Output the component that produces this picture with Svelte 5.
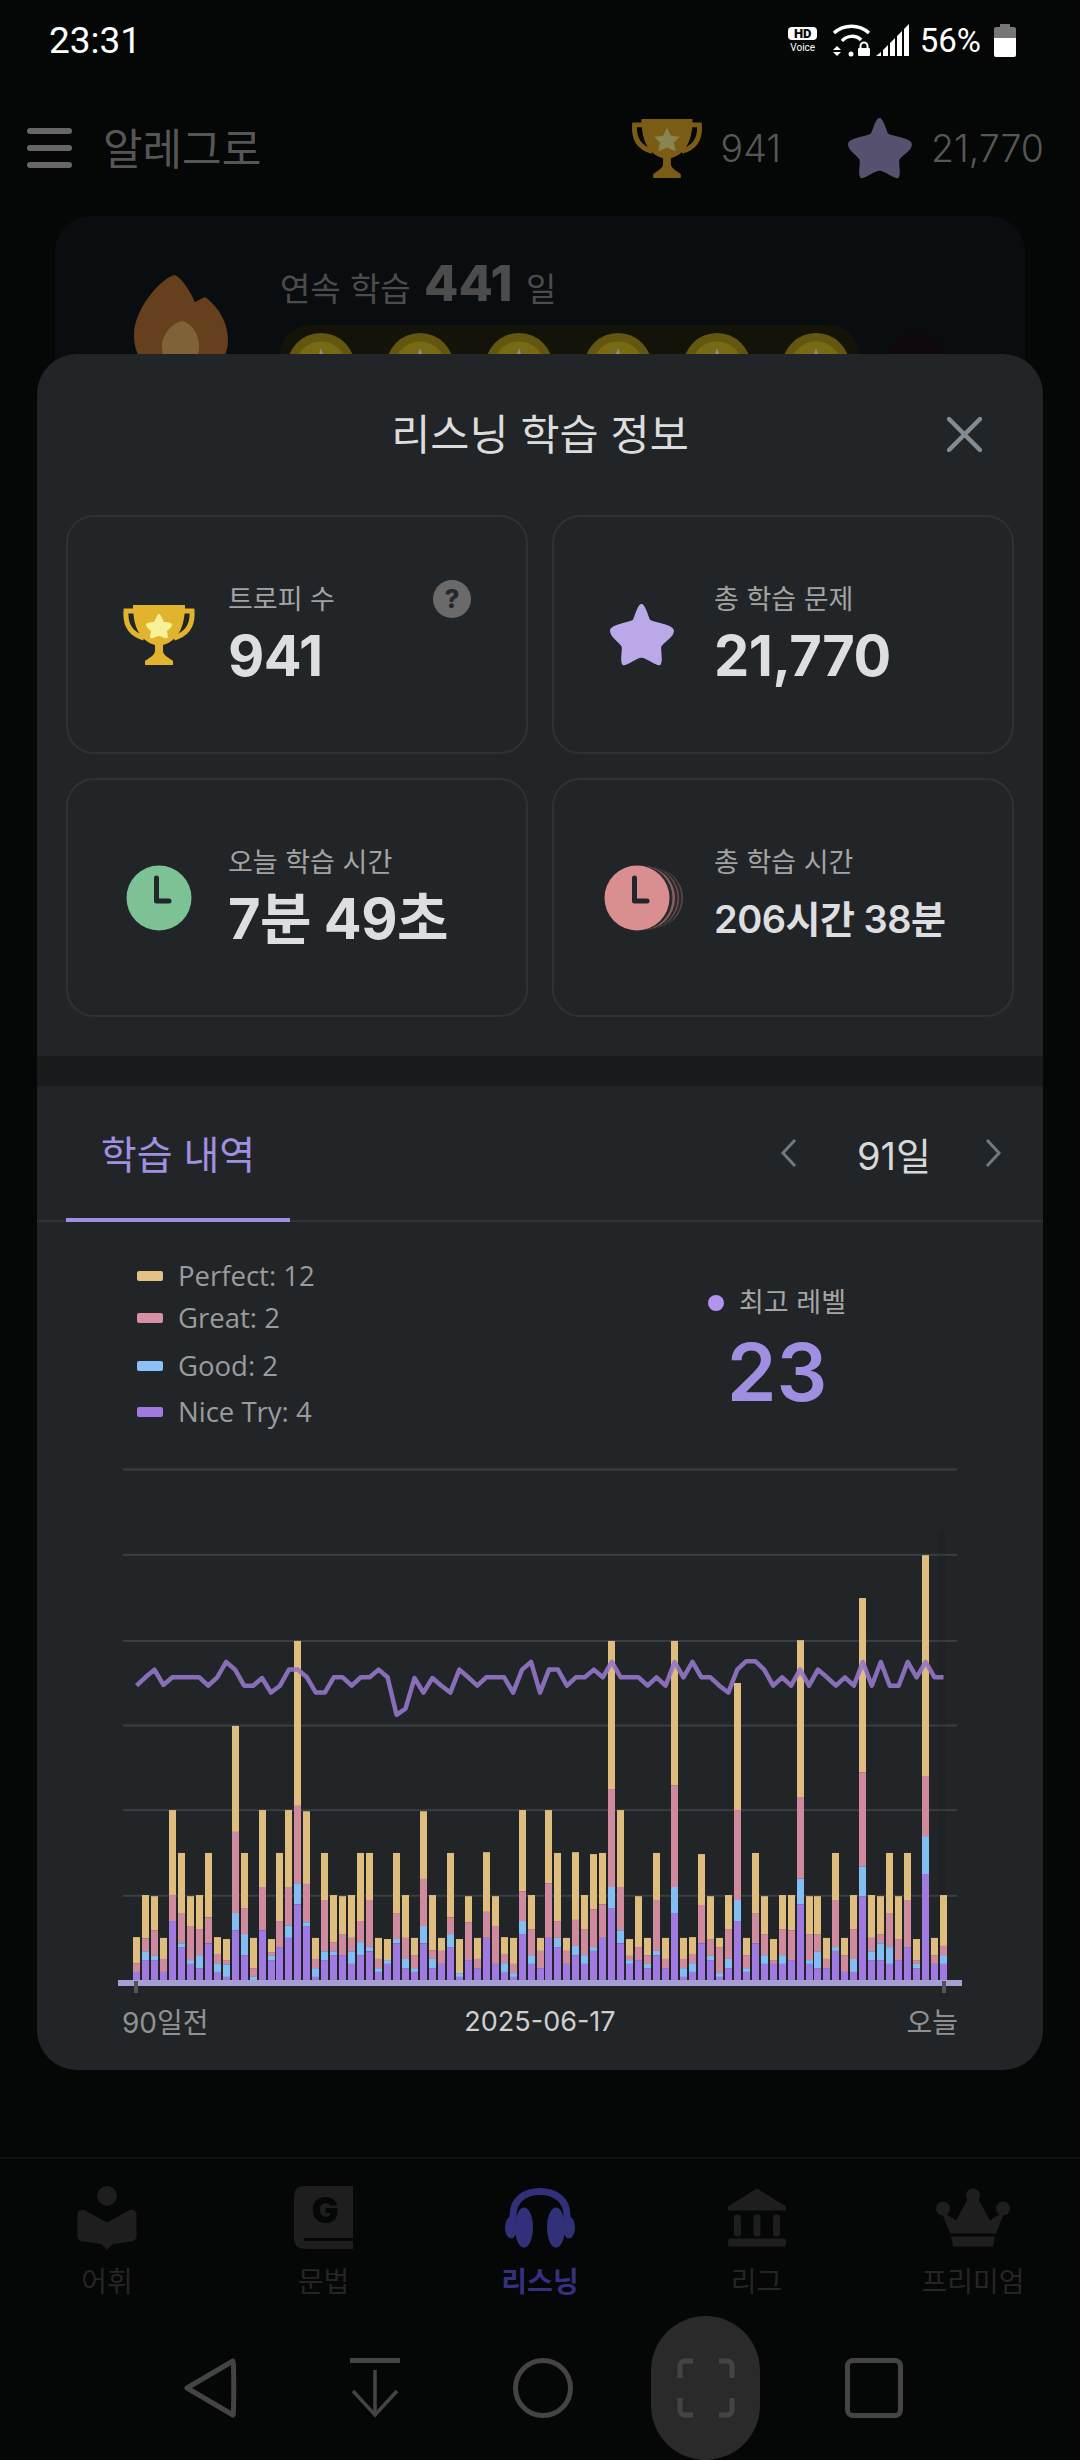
<script>
  const legend = [
    { label: 'Perfect: 12', color: '#e3c283' },
    { label: 'Great: 2', color: '#d68fa5' },
    { label: 'Good: 2', color: '#8ac2f7' },
    { label: 'Nice Try: 4', color: '#a07ae0' }
  ]

  // top edge of each stack segment, in chart units: purple, blue, pink, yellow
  const bars = [
    [1390,1390,1367,1299],[1359,1336,1302,1189],[1359,1348,1281,1192],[1390,1390,1356,1301],[1257,1257,1189,967],
    [1325,1315,1236,1079],[1369,1359,1270,1192],[1380,1346,1278,1189],[1315,1315,1247,1079],[1390,1367,1343,1299],
    [1403,1370,1359,1304],[1281,1236,1024,747],[1346,1291,1223,1079],[1411,1403,1380,1301],[1281,1281,1168,967],
    [1359,1348,1338,1304],[1325,1325,1257,1079],[1301,1268,1168,967],[1213,1158,956,525],[1270,1260,1160,970],
    [1403,1380,1356,1301],[1359,1336,1202,1079],[1346,1336,1312,1189],[1346,1346,1291,1192],[1369,1336,1301,1189],
    [1346,1312,1257,1079],[1336,1325,1202,1079],[1390,1380,1356,1301],[1369,1359,1359,1304],[1315,1304,1236,1079],
    [1380,1356,1301,1189],[1390,1380,1346,1301],[1315,1270,1147,970],[1380,1356,1333,1189],[1369,1369,1335,1301],
    [1325,1291,1247,1079],[1403,1393,1393,1304],[1359,1359,1260,1192],[1380,1380,1356,1301],[1301,1301,1233,1077],
    [1369,1369,1270,1192],[1390,1367,1343,1299],[1403,1393,1369,1301],[1291,1257,1179,967],[1369,1346,1278,1189],
    [1380,1380,1335,1301],[1301,1301,1158,967],[1325,1301,1257,1079],[1369,1369,1335,1301],[1346,1322,1254,1077],
    [1369,1346,1278,1189],[1335,1325,1226,1082],[1301,1301,1213,1079],[1223,1168,912,525],[1315,1281,1168,967],
    [1369,1359,1348,1304],[1359,1359,1325,1192],[1380,1369,1346,1301],[1346,1335,1202,1079],[1380,1380,1356,1301],
    [1236,1168,902,525],[1403,1380,1356,1301],[1390,1367,1343,1299],[1315,1315,1215,1082],[1359,1348,1304,1192],
    [1403,1393,1325,1301],[1380,1356,1278,1189],[1257,1202,967,635],[1390,1380,1346,1301],[1315,1315,1236,1079],
    [1369,1346,1291,1192],[1369,1369,1359,1304],[1369,1346,1278,1189],[1359,1359,1281,1189],[1213,1146,933,523],
    [1369,1359,1291,1192],[1380,1336,1291,1192],[1380,1380,1356,1301],[1335,1325,1202,1079],[1390,1390,1346,1301],
    [1390,1356,1278,1189],[1192,1114,868,413],[1359,1336,1301,1189],[1359,1315,1291,1192],[1369,1325,1236,1079],
    [1359,1359,1304,1192],[1325,1325,1202,1079],[1380,1369,1359,1304],[1134,1035,878,301],[1369,1369,1346,1301],
    [1369,1346,1322,1189]
  ]

  const levels = [
    642,620,600,640,620,620,620,620,642,620,580,600,642,642,622,660,642,600,600,620,660,660,620,620,642,620,620,600,620,718,
    702,622,660,622,642,660,600,620,642,620,620,620,660,600,580,660,600,600,642,620,620,600,620,580,620,620,620,642,620,642,
    580,620,580,620,620,642,660,600,578,578,600,642,620,642,600,642,600,620,642,620,642,580,642,580,642,642,580,620,580,620,620
  ]

  const base = 1411
  const unit = 2.613
  const pitch = 8.967
  const toY = (v) => v / unit - 10
  const barX = (i) => Math.round(33 + pitch * i)
  const gridLines = [77, 300, 525, 746, 967, 1191]
  const linePoints = levels.map((v, i) => `${36.5 + pitch * i},${toY(v)}`).join(' ')
  const segments = bars.flatMap((b, i) => {
    const [purple, blue, pink, yellow] = b
    return [
      { i, top: yellow, bottom: pink, color: '#dfbd7f' },
      { i, top: pink, bottom: blue, color: '#cf8a9e' },
      { i, top: blue, bottom: purple, color: '#84bdf2' },
      { i, top: purple, bottom: base, color: '#a07ae0' }
    ].filter((s) => s.bottom > s.top)
  })

  const coins = [0, 1, 2, 3, 4, 5]
</script>

<div class="page">
  <div class="status">
    <span class="time">23:31</span>
    <div class="status-right">
      <div class="hd"><span class="hd-top">HD</span><span class="hd-voice">Voice</span></div>
      <svg class="wifi" width="40" height="34" viewBox="0 0 40 34">
        <path d="M2 10C12 1 27 1 37 10" fill="none" stroke="#fff" stroke-width="3.5" />
        <path d="M10 18C15 12 24 12 29 17" fill="none" stroke="#fff" stroke-width="3.5" />
        <circle cx="19" cy="31" r="2.5" fill="#fff" />
        <path d="M5 23l4 4H1zM1 29h8l-4 4z" fill="#fff" />
        <rect x="26" y="25" width="12" height="8" rx="1" fill="#fff" />
        <path d="M28.500 25v-2a3.500 3.500 0 0 1 7 0v2" fill="none" stroke="#fff" stroke-width="2" />
      </svg>
      <svg class="signal" width="34" height="32" viewBox="0 0 34 32">
        <path d="M0 32l5-4v4zM7 32V26l5-5v11zM14 32V19l5-5v18zM21 32V12l5-5v25zM28 32V5l5-5v32z" fill="#fff" />
      </svg>
      <span class="battery-text">56%</span>
      <div class="battery"><span class="battery-nub"></span><span class="battery-empty"></span><span class="battery-full"></span></div>
    </div>
  </div>

  <header class="header">
    <div class="burger"><span></span><span></span><span></span></div>
    <span class="app-name">알레그로</span>
    <div class="counts">
      <svg class="count-icon" width="74" height="60" viewBox="0 0 74 61">
        <path d="M12 7H4C3 20 8 30 22 34M62 7H70C71 20 66 30 52 34" fill="none" stroke="#7a5c14" stroke-width="5" />
        <path d="M11 1H63C63 20 58 36 41 41V47C41 51 47 54 51 57V61H23V57C27 54 33 51 33 47V41C16 36 11 20 11 1Z" fill="#7a5c14" />
        <path d="M37 10l4 8 9 1-6 6 2 9-9-4-9 4 2-9-6-6 9-1z" fill="#8a8450" />
      </svg>
      <span class="count">941</span>
      <svg class="count-icon star-gap" width="66" height="62" viewBox="0 0 63 61" preserveAspectRatio="none">
        <path d="M31 1C34 1 36 8 39 16C41 19 62 20 62 27C62 33 52 38 50 42C49 46 52 56 49 60C46 62 36 53 31 53C26 53 16 62 13 60C10 56 13 46 12 42C10 38 1 33 1 27C1 20 21 19 23 16C26 8 28 1 31 1Z" fill="#575170" />
      </svg>
      <span class="count">21,770</span>
    </div>
  </header>

  <section class="streak">
    <svg class="flame" width="94" height="100" viewBox="0 0 94 100">
      <path d="M40 0C48 2 57 18 61 27L71 22C82 30 94 45 94 65C94 85 80 100 47 100C15 100 0 85 0 60C0 35 25 5 40 0Z" fill="#663f1c" />
      <path d="M48 46C58 48 65 60 65 70C65 85 60 100 47 100C35 100 28 85 28 70C28 60 38 48 48 46Z" fill="#7f6238" />
    </svg>
    <div class="streak-body">
      <div class="streak-title">연속 학습 <b>441</b> 일</div>
      <div class="coin-row">
        <div class="coin-pill">
          {#each coins as c (c)}
            <span class="coin"></span>
          {/each}
        </div>
        <span class="coin coin-dark"></span>
      </div>
    </div>
  </section>

  <nav class="tabbar">
    <div class="tab-item">
      <svg width="60" height="66" viewBox="0 0 60 66">
        <circle cx="30" cy="11" r="10" fill="#1e1e1e" />
        <path d="M0 30C0 26 4 24 8 26L30 38L52 26C56 24 60 26 60 30V52C60 55 58 56 56 57L36 60L30 66L24 60L4 57C2 56 0 55 0 52Z" fill="#1e1e1e" />
      </svg>
      <span>어휘</span>
    </div>
    <div class="tab-item">
      <svg width="60" height="65" viewBox="0 0 60 65">
        <path d="M10 1H59V64H12C4 64 0 60 0 54V11C0 5 4 1 10 1Z" fill="#1e1e1e" />
        <rect x="10" y="53" width="49" height="3" fill="#050606" />
        <text x="31" y="38" text-anchor="middle" class="g-letter">G</text>
      </svg>
      <span>문법</span>
    </div>
    <div class="tab-item active">
      <svg width="70" height="60" viewBox="0 0 70 60">
        <path d="M8 36V28C8 12 20 4 35 4C50 4 62 12 62 28V36" fill="none" stroke="#33307a" stroke-width="7" />
        <ellipse cx="19" cy="40" rx="9" ry="20" fill="#33307a" />
        <ellipse cx="51" cy="40" rx="9" ry="20" fill="#33307a" />
        <ellipse cx="6" cy="40" rx="6" ry="11" fill="#33307a" />
        <ellipse cx="64" cy="40" rx="6" ry="11" fill="#33307a" />
      </svg>
      <span>리스닝</span>
    </div>
    <div class="tab-item">
      <svg width="58" height="58" viewBox="0 0 58 58">
        <path d="M29 0L58 18V21H0V18Z" fill="#1e1e1e" />
        <rect x="0" y="20" width="58" height="2" fill="#1e1e1e" />
        <rect x="6" y="26" width="7" height="22" rx="3" fill="#1e1e1e" />
        <rect x="25.500" y="26" width="7" height="22" rx="3" fill="#1e1e1e" />
        <rect x="45" y="26" width="7" height="22" rx="3" fill="#1e1e1e" />
        <rect x="0" y="50" width="58" height="8" rx="2" fill="#1e1e1e" />
      </svg>
      <span>리그</span>
    </div>
    <div class="tab-item">
      <svg width="74" height="58" viewBox="0 0 74 58">
        <circle cx="37" cy="7" r="7" fill="#1e1e1e" />
        <circle cx="7" cy="20" r="7" fill="#1e1e1e" />
        <circle cx="67" cy="20" r="7" fill="#1e1e1e" />
        <path d="M5 22L20 32L32 10H42L54 32L69 22L60 45H14Z" fill="#1e1e1e" />
        <path d="M15 48H59L57 58H17Z" fill="#1e1e1e" />
      </svg>
      <span>프리미엄</span>
    </div>
  </nav>

  <div class="sysnav">
    <svg class="sys-back" width="54" height="62" viewBox="0 0 54 62">
      <path d="M50 4L4 31L50 58C51 59 51 4 50 4Z" fill="none" stroke="#444" stroke-width="5" stroke-linejoin="round" />
    </svg>
    <svg class="sys-down" width="50" height="60" viewBox="0 0 50 60">
      <rect x="0" y="0" width="50" height="5" fill="#444" />
      <path d="M25 12V57M3 33L25 57L47 33" fill="none" stroke="#444" stroke-width="3.500" />
    </svg>
    <span class="sys-home"></span>
    <div class="sys-pill">
      <svg width="58" height="60" viewBox="0 0 58 60">
        <path d="M3 20V8C3 5 5 3 8 3H16M42 3H50C53 3 55 5 55 8V20M55 40V52C55 55 53 57 50 57H42M16 57H8C5 57 3 55 3 52V40" fill="none" stroke="#444" stroke-width="5" />
      </svg>
    </div>
    <span class="sys-square"></span>
  </div>

  <div class="modal">
    <div class="modal-head">
      <span></span>
      <h2>리스닝 학습 정보</h2>
      <svg class="close" width="35" height="35" viewBox="0 0 35 35">
        <path d="M2 2L33 33M33 2L2 33" stroke="#828c92" stroke-width="4.500" stroke-linecap="round" />
      </svg>
    </div>

    <div class="cards">
      <div class="card">
        <div class="card-icon">
          <svg width="74" height="61" viewBox="0 0 74 61">
            <path d="M12 7H4C3 20 8 30 22 34M62 7H70C71 20 66 30 52 34" fill="none" stroke="#e2b42e" stroke-width="5" />
            <path d="M11 1H63C63 20 58 36 41 41V47C41 51 47 54 51 57V61H23V57C27 54 33 51 33 47V41C16 36 11 20 11 1Z" fill="#e2b42e" />
            <path d="M37 10C39 10 41 17 42 18C44 18 50 18 50 21C50 23 46 26 45 27C45 29 47 34 45 34C43 35 39 32 37 32C35 32 31 35 29 34C27 34 29 29 29 27C28 26 24 23 24 21C24 18 30 18 32 18C33 17 35 10 37 10Z" fill="#f7f29a" />
          </svg>
        </div>
        <div class="card-text">
          <div class="card-label">트로피 수</div>
          <div class="card-value">941</div>
        </div>
        <span class="help">?</span>
      </div>

      <div class="card">
        <div class="card-icon star-icon">
          <svg width="66" height="63" viewBox="0 0 63 61" preserveAspectRatio="none">
            <path d="M31 1C34 1 36 8 39 16C41 19 62 20 62 27C62 33 52 38 50 42C49 46 52 56 49 60C46 62 36 53 31 53C26 53 16 62 13 60C10 56 13 46 12 42C10 38 1 33 1 27C1 20 21 19 23 16C26 8 28 1 31 1Z" fill="#bba8e8" />
          </svg>
        </div>
        <div class="card-text">
          <div class="card-label">총 학습 문제</div>
          <div class="card-value">21,770</div>
        </div>
      </div>

      <div class="card">
        <div class="card-icon">
          <svg width="66" height="66" viewBox="0 0 66 66">
            <circle cx="33" cy="33" r="32.500" fill="#7cc294" />
            <path d="M30.500 13V36H43" fill="none" stroke="#22252a" stroke-width="5" stroke-linecap="round" stroke-linejoin="round" />
          </svg>
        </div>
        <div class="card-text">
          <div class="card-label">오늘 학습 시간</div>
          <div class="card-value">7분 49초</div>
        </div>
      </div>

      <div class="card">
        <div class="card-icon">
          <svg width="82" height="66" viewBox="0 0 82 66">
            <circle cx="49" cy="33" r="30" fill="#5d4847" />
            <circle cx="46.500" cy="33" r="31" fill="#2b2a2d" />
            <circle cx="44" cy="33" r="31" fill="#6e5150" />
            <circle cx="41.500" cy="33" r="32" fill="#2b2a2d" />
            <circle cx="39" cy="33" r="32" fill="#86605f" />
            <circle cx="36" cy="33" r="32.500" fill="#2b2a2d" />
            <circle cx="33" cy="33" r="32.500" fill="#d98f8f" />
            <path d="M30.500 13V36H43" fill="none" stroke="#22252a" stroke-width="5" stroke-linecap="round" stroke-linejoin="round" />
          </svg>
        </div>
        <div class="card-text">
          <div class="card-label">총 학습 시간</div>
          <div class="card-value small">206시간 38분</div>
        </div>
      </div>
    </div>

    <div class="band"></div>

    <div class="tabs">
      <div class="tab-on">학습 내역</div>
      <div class="range">
        <svg width="18" height="30" viewBox="0 0 18 30">
          <path d="M15 2L3 15L15 28" fill="none" stroke="#6f7a80" stroke-width="3" />
        </svg>
        <span class="range-value">91일</span>
        <svg width="18" height="30" viewBox="0 0 18 30">
          <path d="M3 2L15 15L3 28" fill="none" stroke="#6f7a80" stroke-width="3" />
        </svg>
      </div>
    </div>

    <div class="summary">
      <ul class="legend">
        {#each legend as item (item.label)}
          <li>
            <span class="swatch" style="background: {item.color}"></span>
            {item.label}
          </li>
        {/each}
      </ul>
      <div class="best">
        <div class="best-label"><span class="dot"></span>최고 레벨</div>
        <div class="best-value">23</div>
      </div>
    </div>

    <svg class="chart" width="880" height="550" viewBox="0 0 880 550">
      {#each gridLines as g (g)}
        <rect x="23" y={toY(g) - 1} width="834" height="2" fill="#3b3e40" />
      {/each}
      <rect x="838" y="82" width="7" height="448" fill="#000" opacity="0.08" />
      {#each segments as s (s.i + s.color)}
        <rect x={barX(s.i)} y={toY(s.top)} width="7" height={(s.bottom - s.top) / unit} fill={s.color} />
      {/each}
      <polyline points={linePoints} fill="none" stroke="#9475c8" stroke-opacity="0.9" stroke-width="4.500" stroke-linejoin="round" />
      <rect x="18" y="530" width="844" height="6" fill="#a6a0d2" />
      <rect x="34" y="531" width="4" height="12" fill="#555" />
      <rect x="842" y="531" width="4" height="12" fill="#555" />
    </svg>

    <div class="axis">
      <span class="axis-start">90일전</span>
      <span class="axis-mid">2025-06-17</span>
      <span class="axis-end">오늘</span>
    </div>
  </div>
</div>

<style>
  :global(body) {
    margin: 0;
    background: #050606;
  }

  .page {
    position: relative;
    display: flex;
    flex-direction: column;
    width: 1080px;
    height: 2460px;
    overflow: hidden;
    background: #050606;
    font-family: Inter, 'Noto Sans CJK KR', sans-serif;
  }

  .status {
    display: flex;
    align-items: center;
    justify-content: space-between;
    height: 80px;
    padding: 0 64px 0 49px;
    box-sizing: border-box;
    color: #fff;
    font-family: Roboto, sans-serif;
  }

  .time {
    font-size: 37px;
  }

  .status-right {
    display: flex;
    align-items: center;
  }

  .hd {
    display: flex;
    flex-direction: column;
    align-items: center;
    width: 30px;
    margin-right: 14px;
  }

  .hd-top {
    width: 29px;
    height: 13px;
    border-radius: 4px;
    background: #fff;
    color: #050606;
    font-size: 13px;
    font-weight: 900;
    line-height: 13px;
    text-align: center;
  }

  .hd-voice {
    margin-top: 2px;
    font-size: 10px;
    line-height: 12px;
  }

  .wifi {
    margin-right: 4px;
  }

  .signal {
    margin-right: 10px;
  }

  .battery-text {
    margin-right: 13px;
    font-size: 33px;
  }

  .battery {
    display: flex;
    flex-direction: column;
    align-items: center;
    width: 22px;
  }

  .battery-nub {
    width: 10px;
    height: 3px;
    background: #777;
  }

  .battery-empty {
    width: 22px;
    height: 11px;
    border-radius: 2px 2px 0 0;
    background: #777;
  }

  .battery-full {
    width: 22px;
    height: 19px;
    border-radius: 0 0 2px 2px;
    background: #fff;
  }

  .header {
    display: flex;
    align-items: center;
    height: 136px;
    padding: 0 36px 0 27px;
    color: #565656;
  }

  .burger {
    display: flex;
    flex-direction: column;
    gap: 11px;
    width: 45px;
    margin-right: 31px;
  }

  .burger span {
    height: 6px;
    border-radius: 3px;
    background: #666;
  }

  .app-name {
    margin-top: -5px;
    font-size: 43px;
  }

  .counts {
    display: flex;
    align-items: center;
    margin-left: auto;
  }

  .count-icon {
    margin-right: 17px;
  }

  .star-gap {
    margin-left: 66px;
    margin-right: 18px;
  }

  .count {
    font-size: 37.5px;
    font-weight: 300;
  }

  .streak {
    display: flex;
    gap: 52px;
    height: 260px;
    margin: 0 55px;
    padding: 59px 0 0 79px;
    box-sizing: border-box;
    border-radius: 36px;
    background: #0a0d0f;
  }

  .streak-body {
    margin-top: -14px;
  }

  .streak-title {
    color: #4c4c4c;
    font-size: 33px;
    line-height: 44px;
  }

  .streak-title b {
    margin: 0 4px;
    font-size: 50px;
    font-weight: 800;
  }

  .coin-row {
    display: flex;
    align-items: flex-start;
    gap: 24px;
    margin-top: 14px;
  }

  .coin-pill {
    display: flex;
    gap: 31px;
    padding: 8px 9px 30px 7px;
    border-radius: 30px;
    background: #14130a;
  }

  .coin {
    position: relative;
    width: 68px;
    height: 68px;
    border-radius: 50%;
    background: radial-gradient(circle, #786a14 0 25px, #63560e 26px);
  }

  .coin::after {
    content: '';
    position: absolute;
    top: 15px;
    left: 27px;
    width: 14px;
    height: 22px;
    background: #8c8c8c;
    clip-path: polygon(50% 0, 100% 100%, 0 100%);
  }

  .coin-dark {
    margin-top: 8px;
    background: #0f090d;
  }

  .coin-dark::after {
    display: none;
  }

  .tabbar {
    display: flex;
    justify-content: space-between;
    height: 159px;
    margin-top: auto;
    padding: 26px 38px 0;
    box-sizing: border-box;
    border-top: 2px solid #0e1011;
  }

  .tab-item {
    display: flex;
    flex-direction: column;
    align-items: center;
    width: 138px;
    height: 116px;
    color: #252525;
    font-size: 28px;
  }

  .tab-item svg {
    height: 66px;
  }

  .tab-item span {
    margin-top: 13px;
    line-height: 38px;
  }

  .tab-item.active {
    color: #35307f;
    font-weight: 700;
  }

  .g-letter {
    fill: #050606;
    font-family: Inter, sans-serif;
    font-size: 36px;
    font-weight: 900;
  }

  .sysnav {
    display: flex;
    align-items: center;
    height: 144px;
    padding-left: 183px;
    box-sizing: border-box;
  }

  .sys-back {
    margin-right: 113px;
  }

  .sys-down {
    margin-right: 113px;
  }

  .sys-home {
    width: 50px;
    height: 50px;
    border: 5px solid #444;
    border-radius: 50%;
    margin-right: 78px;
  }

  .sys-pill {
    display: flex;
    align-items: center;
    justify-content: center;
    width: 109px;
    height: 144px;
    border-radius: 55px;
    background: #2a2a2a;
    margin-right: 85px;
  }

  .sys-square {
    width: 48px;
    height: 50px;
    border: 5px solid #444;
    border-radius: 8px;
  }

  .modal {
    position: absolute;
    top: 354px;
    left: 37px;
    width: 1006px;
    height: 1716px;
    border-radius: 40px;
    background: #222528;
  }

  .modal-head {
    display: grid;
    grid-template-columns: 1fr auto 1fr;
    align-items: center;
    height: 161px;
  }

  .modal-head h2 {
    margin: -6px 0 0;
    color: #dcdcdc;
    font-size: 42.5px;
    font-weight: 400;
  }

  .close {
    justify-self: end;
    margin-right: 61px;
  }

  .cards {
    display: grid;
    grid-template-columns: 462px 462px;
    grid-auto-rows: 239px;
    gap: 24px;
    padding: 0 29px;
  }

  .card {
    position: relative;
    display: flex;
    box-sizing: border-box;
    border: 2px solid #2f3235;
    border-radius: 28px;
  }

  .card-icon {
    display: flex;
    align-items: center;
    justify-content: center;
    flex: none;
    width: 160px;
    padding-left: 22px;
    box-sizing: border-box;
  }

  .card-icon.star-icon {
    padding-left: 16px;
  }

  .card-text {
    padding-top: 68px;
  }

  .card-label {
    color: #a3a3a3;
    font-size: 27px;
    line-height: 30px;
  }

  .card-value {
    margin-top: 5px;
    color: #dedee1;
    font-size: 56px;
    font-weight: 700;
    letter-spacing: -0.5px;
    line-height: 72px;
  }

  .card-value.small {
    font-size: 38px;
    font-weight: 600;
  }

  .help {
    position: absolute;
    top: 63px;
    right: 55px;
    width: 38px;
    height: 38px;
    border-radius: 50%;
    background: #6a6a6a;
    color: #26282b;
    font-size: 26px;
    font-weight: 800;
    line-height: 38px;
    text-align: center;
  }

  .band {
    height: 30px;
    margin-top: 39px;
    background: #191a1c;
  }

  .tabs {
    display: flex;
    align-items: center;
    height: 136px;
    padding: 0 41px 0 29px;
    border-bottom: 2px solid #303336;
    box-sizing: border-box;
  }

  .tab-on {
    position: relative;
    width: 224px;
    height: 136px;
    color: #a18fe0;
    font-size: 39px;
    line-height: 139px;
    text-align: center;
  }

  .tab-on::after {
    content: '';
    position: absolute;
    left: 0;
    right: 0;
    bottom: -1px;
    height: 4px;
    background: #a18fe0;
  }

  .range {
    display: flex;
    align-items: center;
    gap: 56px;
    margin-left: auto;
    color: #d8d8d8;
    font-size: 38px;
  }

  .range-value {
    margin: 0 -3px 0 3px;
  }

  .summary {
    display: flex;
    height: 228px;
  }

  .legend {
    margin: 0 0 0 100px;
    padding: 32px 0 0;
    list-style: none;
    color: #9a9c9c;
    font-family: 'Open Sans', sans-serif;
    font-size: 27.5px;
    line-height: 44px;
  }

  .legend li {
    display: flex;
    align-items: center;
    gap: 15px;
  }

  .legend li:nth-child(2) {
    margin-top: -2px;
  }

  .legend li:nth-child(3) {
    margin-top: 4px;
  }

  .legend li:nth-child(4) {
    margin-top: 2px;
  }

  .swatch {
    width: 26px;
    height: 10px;
    border-radius: 2px;
  }

  .best {
    margin-left: auto;
    margin-right: 197px;
    padding-top: 64px;
    text-align: center;
  }

  .best-label {
    display: flex;
    align-items: center;
    gap: 15px;
    color: #a5a5a5;
    font-size: 27px;
    line-height: 34px;
  }

  .dot {
    width: 16px;
    height: 16px;
    border-radius: 50%;
    background: #b294ec;
  }

  .best-value {
    margin-top: 7px;
    color: #a08fe0;
    font-size: 80px;
    font-weight: 600;
    line-height: 90px;
  }

  .chart {
    display: block;
    margin-left: 63px;
  }

  .axis {
    display: grid;
    grid-template-columns: 1fr auto 1fr;
    align-items: center;
    height: 40px;
    margin-top: 1px;
    padding: 0 85px;
    color: #8f9294;
    font-size: 28px;
  }

  .axis-mid {
    color: #cfcfcf;
    font-size: 27px;
  }

  .axis-end {
    justify-self: end;
  }
</style>
